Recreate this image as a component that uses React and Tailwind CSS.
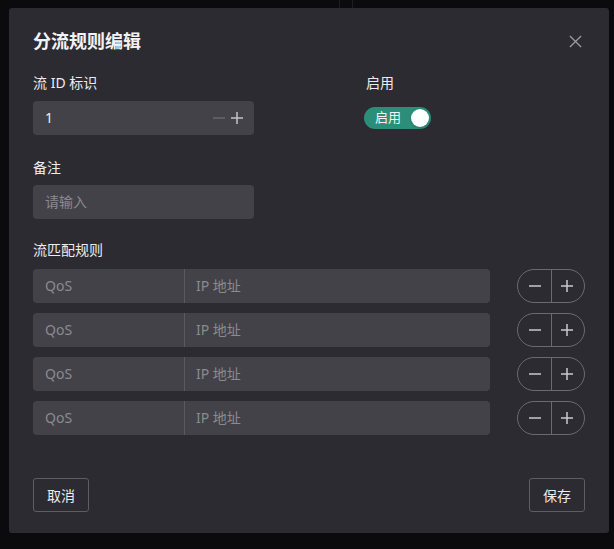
import React, { useState } from "react";

const font = { fontFamily: '"Noto Sans", "Noto Sans CJK SC", sans-serif' };

const Minus = ({ className }) => (
  <svg viewBox="0 0 12 12" className={className} fill="none" stroke="currentColor" strokeWidth="1.5">
    <path d="M0 6h12" />
  </svg>
);

const Plus = ({ className }) => (
  <svg viewBox="0 0 12 12" className={className} fill="none" stroke="currentColor" strokeWidth="1.5">
    <path d="M0 6h12M6 0v12" />
  </svg>
);

const RuleRow = () => (
  <div className="flex items-center">
    <div className="flex h-[34px] w-[457px] rounded-[4px] bg-[#434248] text-[14px] leading-none text-[#8b8a90]">
      <div className="flex w-[152px] items-center border-r border-[#5b5a60] pl-3">QoS</div>
      <div className="flex flex-1 items-center pl-[11px]">IP 地址</div>
    </div>
    <div className="ml-[27px] flex h-[34px] w-[68px] rounded-full border border-[#6b6a70] text-[#c9c9cc]">
      <button className="flex flex-1 items-center justify-center border-r border-[#6b6a70] pl-[2px]">
        <Minus className="h-3 w-3" />
      </button>
      <button className="flex flex-1 items-center justify-center pr-[2px]">
        <Plus className="h-3 w-3" />
      </button>
    </div>
  </div>
);

export default function App() {
  const [enabled, setEnabled] = useState(true);
  const rows = [1, 2, 3, 4];

  return (
    <div className="relative h-[549px] w-[614px] overflow-hidden bg-[#0b0b0e] pl-[9px] pt-2" style={font}>
      <div className="absolute left-[339px] top-0 h-2 w-px bg-[#1e1e22]" />
      <div className="absolute left-[352px] top-0 h-2 w-px bg-[#1e1e22]" />
      <div className="relative flex h-[525px] w-[600px] flex-col rounded-[3px] bg-[#2c2b32] px-6 pt-5 pb-[21px]">
        {/* header */}
        <div className="flex h-[26px] items-center justify-between">
          <h2 className="text-[18px] font-bold text-[#f2f2f4]">分流规则编辑</h2>
          <button className="mr-[3px] text-[#9c9ba0]">
            <svg viewBox="0 0 14 14" className="h-[13px] w-[13px]" fill="none" stroke="currentColor" strokeWidth="1.4">
              <path d="M1 1l12 12M13 1L1 13" />
            </svg>
          </button>
        </div>

        {/* id + toggle */}
        <div className="mt-[19px] flex">
          <div className="w-[333px]">
            <div className="text-[14px] leading-5 text-[#ececef]">流 ID 标识</div>
            <div className="mt-2 flex h-[34px] w-[221px] items-center rounded-[4px] bg-[#434248] pl-3 pr-[11px]">
              <span className="flex-1 text-[14px] leading-none text-[#f0f0f2]">1</span>
              <Minus className="h-3 w-3 text-[#68676d]" />
              <Plus className="ml-[6px] h-3 w-3 text-[#c2c2c6]" />
            </div>
          </div>
          <div>
            <div className="text-[14px] leading-5 text-[#ececef]">启用</div>
            <div className="mt-2 flex h-[34px] items-center">
              <button
                onClick={() => setEnabled(!enabled)}
                className="-ml-[2px] flex h-[22px] w-[67px] items-center justify-between rounded-full bg-[#2a8e78] pl-[11px] pr-[2px]"
              >
                <span className="text-[13px] text-[#f4f4f4]">启用</span>
                <span className="h-[18px] w-[18px] rounded-full bg-white shadow" />
              </button>
            </div>
          </div>
        </div>

        {/* remark */}
        <div className="mt-[23px] text-[14px] leading-5 text-[#ececef]">备注</div>
        <div className="mt-[7px] flex h-[34px] w-[221px] items-center rounded-[4px] bg-[#434248] pl-3 text-[14px] leading-none text-[#8b8a90]">
          请输入
        </div>

        {/* rules */}
        <div className="mt-[21px] text-[14px] leading-5 text-[#ececef]">流匹配规则</div>
        <div className="mt-[9px] flex flex-col gap-[10px]">
          {rows.map((r) => (
            <RuleRow key={r} />
          ))}
        </div>

        {/* footer */}
        <div className="mt-auto flex justify-between">
          <button className="h-[34px] w-[56px] rounded-[3px] border border-[#5e5d63] text-[14px] text-[#ececef]">取消</button>
          <button className="h-[34px] w-[56px] rounded-[3px] border border-[#5e5d63] text-[14px] text-[#ececef]">保存</button>
        </div>
      </div>
    </div>
  );
}
